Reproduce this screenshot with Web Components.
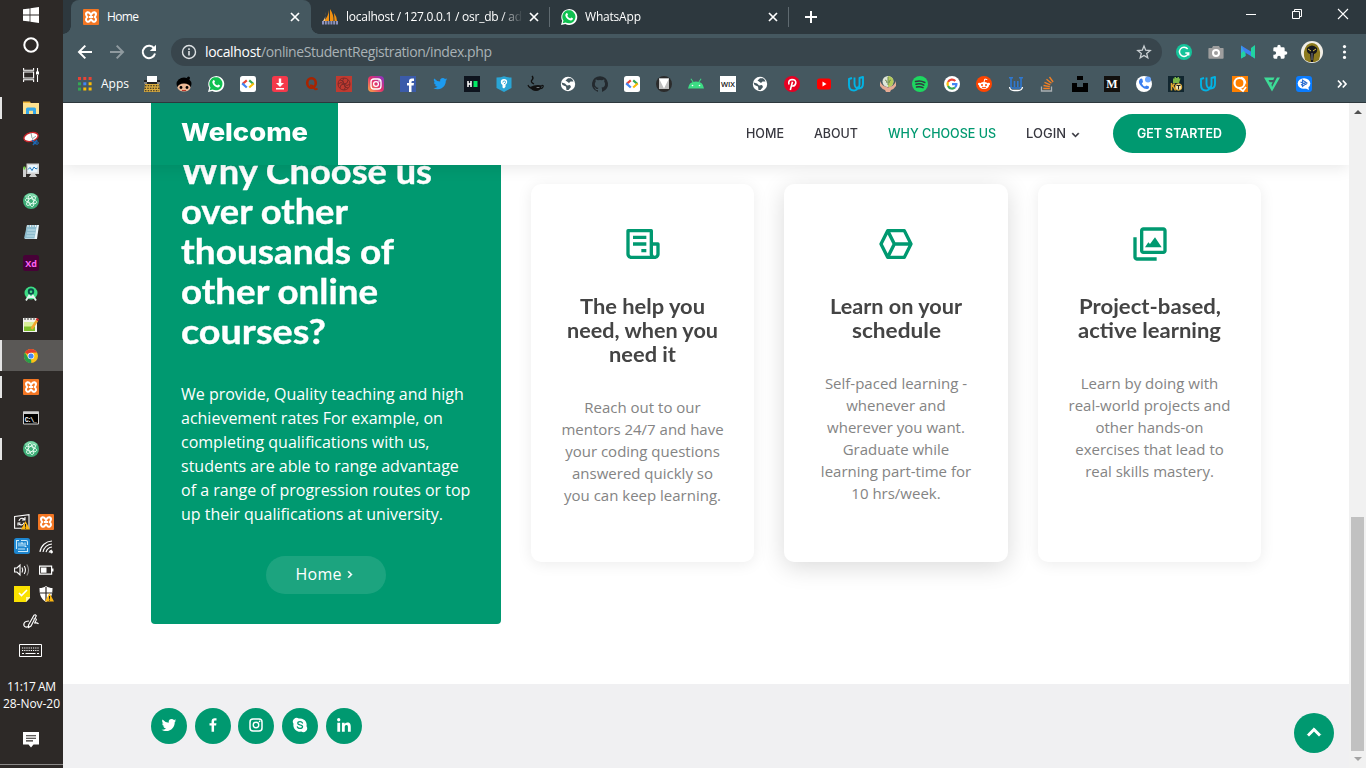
<!DOCTYPE html>
<html lang="en">
<head>
<meta charset="utf-8">
<title>Home</title>
<style>
html,body{margin:0;height:100%;overflow:hidden;background:#fff}
body{font-family:"Open Sans","Noto Sans",sans-serif}
</style>
</head>
<body>
<desktop-shell>
  <task-bar slot="bar"></task-bar>
  <browser-chrome slot="chrome"></browser-chrome>
  <site-page slot="page"></site-page>
</desktop-shell>
<script>
const G = '#009970';
const svg = (vb, body) => [vb, body];
const ICONS = {
  // taskbar
  win: svg(16, '<path fill="#fff" d="M0 2.3 6.6 1.4V7.6H0zM7.4 1.3 16 0V7.6H7.4zM0 8.4H6.6V14.6L0 13.7zM7.4 8.4H16V16L7.4 14.7z"/>'),
  ring: svg(16, '<circle cx="8" cy="8" r="6.7" fill="none" stroke="#fff" stroke-width="2"/>'),
  taskview: svg(16, '<g fill="none" stroke="#fff" stroke-width="1.1"><path d="M.6 1v2.2h10V1M.6 15v-2.200h10V15M.6 5h10v6H.6zM14.500 1v4M14.500 8v7"/></g><path fill="#fff" d="M13 4.500h3v3h-3z"/>'),
  folder: svg(16, '<path fill="#f0b73b" d="M0 1.500h7l1 2H0z"/><path fill="#fde18f" d="M0 3h16v11H0z"/><path fill="#37a8e8" d="M3 14V9q0-1.500 1.500-1.500h7Q13 7.500 13 9v5h-3v-3.200H6V14z"/>'),
  snip: svg(16, '<ellipse cx="8" cy="6" rx="7.300" ry="4.300" fill="#fff" stroke="#c9262c" stroke-width="1.400" transform="rotate(-15 8 6)"/><path d="M8 2l1 5M9 8l4-3" stroke="#9aa" fill="none"/><path d="M9 9l4 4M14 9l-4 5" stroke="#1d68b5" stroke-width="1.500"/><circle cx="14" cy="12" r="1.300" fill="none" stroke="#1d68b5"/>'),
  monitor: svg(16, '<path fill="#d4d4d4" d="M3.500 1.500H16V12H3.500z"/><path fill="#e9f5fd" d="M5 3h9.500v7.500H5z"/><path d="M5 7.500l2-2 2 3 2-3.500 2 2 1.500-1" fill="none" stroke="#1b77bd"/><path fill="#cfcfcf" d="M8 12h4l2 3H6zM0 5.500h3V15H0z"/><path fill="#6c3" d="M.500 4.500h1.800v3H.500z"/>'),
  atom: svg(16, '<circle cx="8" cy="8" r="8" fill="#3fae78"/><path d="M2.500 4.500a6.500 6.500 0 0 1 11 0" stroke="#9be8bf" fill="none" stroke-width="2.500" opacity=".7"/><g fill="none" stroke="#e9fff3" stroke-width=".9"><ellipse cx="8" cy="8" rx="5.800" ry="2.400" transform="rotate(15 8 8)"/><ellipse cx="8" cy="8" rx="5.800" ry="2.400" transform="rotate(75 8 8)"/><ellipse cx="8" cy="8" rx="5.800" ry="2.400" transform="rotate(135 8 8)"/></g>'),
  notepad: svg(16, '<path fill="#e9f5fa" d="M4 1h12l-2 14H2z"/><path fill="#8dbccd" d="M4 1h10l-2.500 13.500H1z"/><path d="M5 1v2M7.500 1v2M10 1v2M12.500 1v2" stroke="#eee"/><path d="M4.500 6h8M4 9h8M3.500 12h8" stroke="#c3e1ec"/>'),
  xd: svg(16, '<rect width="16" height="16" rx="2.500" fill="#470137"/><text x="8" y="11.500" text-anchor="middle" font-family="Open Sans" font-weight="700" font-size="9" fill="#ff61f6">Xd</text>'),
  studio: svg(16, '<circle cx="8" cy="7" r="6.500" fill="#3ddc84"/><path fill="none" stroke="#e3f5ee" stroke-width="1.800" d="M3 14.500 6.800 8.500M13 14.500 9.200 8.500M4 12q4-2 8 0"/><circle cx="8" cy="5.500" r="3.200" fill="#0b4f4c"/><circle cx="8" cy="5.800" r="1.300" fill="#3ddc84"/>'),
  npp: svg(16, '<path fill="#f3f3ee" d="M0 1h14v14H0z"/><path fill="#d9ef9a" d="M1 5h11v9H1z"/><path fill="#7fc02a" d="M1 9.500h11V14H1z"/><path d="M2 0v3M5 0v3M8 0v3M11 0v3" stroke="#444"/><path d="M8.500 12 14 3.500" stroke="#f1a72e" stroke-width="2.600"/><path d="M13.800 3.500l1.200-2" stroke="#c92a2a" stroke-width="2.600"/>'),
  chrome: svg(16, '<circle cx="8" cy="8" r="7" fill="#fbc116"/><path fill="#e33b2e" d="M8 8 1.900 4.500A7 7 0 0 1 14 4.600L8 4.800z"/><path fill="#2a9d4b" d="M8 8l.3 7A7 7 0 0 1 1.900 4.500L5.200 9.700z"/><circle cx="8" cy="8" r="3.300" fill="#fff"/><circle cx="8" cy="8" r="2.600" fill="#4586f4"/>'),
  xampp: svg(16, '<rect width="16" height="16" rx="1" fill="#f37623"/><path fill="none" stroke="#fff" stroke-width="2" stroke-linejoin="round" d="M8 6Q6.500 3 4.500 3.200 2.500 4 3.200 6 3.600 7.500 4.500 8 2.800 9 3 11q.8 2.300 3 1.500L8 10.500l2 2q2.200.8 3-1.500.2-2-1.500-3 .9-.5 1.300-2 .7-2-1.300-2.800Q9.500 3 8 6zM6 8h4"/>'),
  cmd: svg(16, '<path fill="#000" stroke="#cfcfcf" d="M.500 2h15v12H.500z"/><path fill="#cfcfcf" d="M0 1.500h16v2.500H0z"/><text x="1.800" y="11.500" font-family="Liberation Mono" font-weight="700" font-size="6.500" fill="#fff" textLength="12">C:\\_</text>'),
  // tray
  update: svg(16, '<path fill="none" stroke="#fff" stroke-width="1.100" d="M.600 2.500 15 .700v13.500H.600zM5 7a3 3 0 0 1 5-2l1 1M11 3v3H8M10 8.500a3 3 0 0 1-5 1.500M4 11.500V9h2.500"/><path fill="#fdb813" d="M11.500 7 16 15.500H7z"/><path d="M11.500 10v2.800M11.500 13.600v1" stroke="#222"/>'),
  graphics: svg(16, '<rect width="16" height="16" rx="2.500" fill="#1e86cf"/><path fill="none" stroke="#c8e9fb" stroke-width="1.100" d="M5 2.500H2.500V11M4 13.500h9.500V10M7 2.500h5q1.500 0 1.500 1.500v3M5 4.500v4M7 8.500V5q1.500-.5 2 .5v3M11 4.500v4h1.500M4 11h7"/>'),
  wifi: svg(16, '<g fill="none" stroke="#fff" stroke-width="1.100"><path d="M2 14A12.500 12.500 0 0 1 14 3M5 14a9.500 9.500 0 0 1 9-8M8 14.200a7 7 0 0 1 6-5.200M11 14.500a4 4 0 0 1 3-2.500"/></g><circle cx="13.500" cy="14" r="1.400" fill="#fff"/>'),
  sound: svg(16, '<g fill="none" stroke="#fff" stroke-width="1.100"><path d="M.600 6h2.300L6 3v10L2.900 10H.600zM8 5.500q1.500 2.500 0 5M10.200 4q2.500 4 0 8"/><path d="M12.800 2.500q3.500 5.500 0 11" opacity=".5"/></g>'),
  battery: svg(16, '<path fill="none" stroke="#fff" stroke-width="1.200" d="M1.600 4.100h12v8h-12z"/><path fill="#fff" d="M3 5.500h5.500v5.200H3zM14 6.500h1.500v3H14z"/>'),
  sticky: svg(16, '<path fill="#fae100" d="M0 0h16v11l-4 5H0z"/><path fill="#fff7a8" d="M12 11h4v1l-4 4z"/><path d="M5 7l2.500 2.500L13 4" fill="none" stroke="#fff" stroke-width="1.600"/>'),
  shield: svg(16, '<path fill="#fff" d="M8 0c2 1.500 4.500 2 6.500 2 0 7-1.500 11-6.500 14C3 13 1.500 9 1.500 2 4 2 6 1.500 8 0z"/><path d="M8 1v14M2 7h12" stroke="#2d2926" stroke-width="1.200"/><path fill="#fdb813" d="M11.500 7 16 15.500H7z"/><path d="M11.500 10v2.800M11.500 13.600v1" stroke="#222"/>'),
  pen: svg(16, '<path fill="none" stroke="#fff" stroke-width="1.100" d="M5.500 11 11 1.200q1.500-1 2.300.6L8 12l-2.500 1.500zM6 7Q2 7 1 9.500q-.8 2.500 1.500 3.500 2.500.5 3.500-1.500M10.500 5q4-1 2.500 1.500-1 1.500-1.500 3M12 9q2.500-.500 3.500 1"/>'),
  keyboard: ['23 13', '<path fill="none" stroke="#fff" d="M.500.500h22v12H.500z"/><path d="M3 4h17M3 6.500h17" stroke="#fff" stroke-dasharray="1.200 1"/><path d="M3 9.500h2M6.500 9.500h10M18 9.500h2" stroke="#fff" stroke-width="1.200"/>'],
  notice: svg(16, '<path fill="#fff" d="M0 0h16v12.500h-5.500L8 15.500l-2.500-3H0z"/><path d="M3 3.700h10M3 6.300h10M3 8.900h7" stroke="#2d2926" stroke-width="1.100"/>'),
  // toolbar
  back: svg(16, '<path fill="none" stroke="#fff" stroke-width="2" d="M15 8H2.500M8.300 1.600 2 8l6.300 6.400"/>'),
  fwd: svg(16, '<path fill="none" stroke="#8f9a9f" stroke-width="2" d="M1 8h12.500M7.700 1.600 14 8l-6.300 6.400"/>'),
  reload: svg(16, '<path fill="none" stroke="#fff" stroke-width="2" d="M13.300 4.800A6.200 6.200 0 1 0 14 9.500"/><path fill="#fff" d="M15 .800v6.200H8.800z"/>'),
  info: svg(16, '<circle cx="8" cy="8" r="6.500" fill="none" stroke="#dfe3e5" stroke-width="1.400"/><path d="M8 7v4.500M8 4.300v1.600" stroke="#dfe3e5" stroke-width="1.600"/>'),
  star: svg(16, '<path fill="none" stroke="#c9cfd2" stroke-width="1.300" d="m8 2 1.700 4.200 4.500.3-3.500 2.900 1.100 4.400L8 11.400l-3.800 2.400 1.100-4.400L1.800 6.500l4.500-.3z"/>'),
  grammarly: svg(16, '<circle cx="8" cy="8" r="8" fill="#15c39a"/><path fill="none" stroke="#fff" stroke-width="1.500" d="M11.700 5A4.600 4.600 0 1 0 12.500 9H9.300M12.700 8.500v3"/>'),
  camera: svg(16, '<path fill="#9e9e9e" d="M1 4h3l1-2h6l1 2h3q.6 0 .6.700v9.300q0 .8-.8.800H1.200q-.8 0-.8-.8V4.700Q.400 4 1 4z"/><circle cx="8" cy="9" r="3" fill="#9e9e9e" stroke="#fff" stroke-width="2"/>'),
  nimbus: svg(16, '<path fill="#35a3e8" d="M1 1.500 5.500 5v7L1 14.500z"/><path fill="#22d3a0" d="M1 14.500V9l4-2.500L5.500 12z"/><path fill="#3f7ff0" d="M1 1.500 15 10v4.500L5 8.500z"/><path fill="#22d3a0" d="M11 4l4-3v13.500L11 12z"/>'),
  puzzle: svg('24', '<path fill="#fff" d="M20.500 11H19V7a2 2 0 0 0-2-2h-4V3.500a2.500 2.500 0 0 0-5 0V5H4a2 2 0 0 0-2 2v3.800h1.500a2.700 2.700 0 0 1 0 5.400H2V20a2 2 0 0 0 2 2h3.800v-1.500a2.700 2.700 0 0 1 5.400 0V22H17a2 2 0 0 0 2-2v-4h1.500a2.500 2.500 0 0 0 0-5z"/>'),
  avatar: svg(22, '<circle cx="11" cy="11" r="11" fill="#f1eee6"/><path fill="#8c7a1e" d="M4 19Q1 10 6 4q5-4 10 0 5 6 2 15l-4 2H8z"/><path fill="#16171c" d="M6 7q5-5 10 0 1 5-3 6l-1 8h-2l-1-8Q5 12 6 7z"/><path d="M7 8l3 2M15 8l-3 2" stroke="#d8c044"/><path d="M11 12v7" stroke="#7d7f8c"/>'),
  dots: svg(16, '<g fill="#fff"><circle cx="8.500" cy="2.600" r="1.600"/><circle cx="8.500" cy="8" r="1.600"/><circle cx="8.500" cy="13.400" r="1.600"/></g>'),
  x: svg(10, '<path d="M1 1l8 8M9 1 1 9" stroke="#fff" stroke-width="1.700"/>'),
  plus: svg(12, '<path d="M6 0v12M0 6h12" stroke="#fff" stroke-width="2"/>'),
  min: svg(10, '<path d="M0 5.500h10" stroke="#fff"/>'),
  restore: svg(10, '<path d="M.500 2.500h7v7h-7zM2.500 2.500v-2h7v7h-2" fill="none" stroke="#fff"/>'),
  close: svg(10, '<path d="M0 0l10 10M10 0 0 10" stroke="#fff" stroke-width="1.100"/>'),
  pma: svg(16, '<path fill="#f29111" d="M7 1Q6.500 7 2 12h5zM8 0q4 6 3.500 12H8zM12 4q3 4 3 8h-2.500z"/><path fill="#f6c78a" d="M3.500 3Q4 8 1 12h2z"/><path d="M0 13.700h16" stroke="#8f93bd" stroke-width="3.500" stroke-dasharray="2 .8"/>'),
  // bookmarks
  apps: svg(14, '<g><path fill="#ea4335" d="M0 0h3v3H0zM5.300 0h3v3h-3zM10.600 0h3v3h-3z"/><path fill="#34a853" d="M0 5.300h3v3H0z"/><path fill="#4285f4" d="M5.300 5.300h3v3h-3z"/><path fill="#fbbc05" d="M10.600 5.300h3v3h-3zM5.300 10.600h3v3h-3zM10.600 10.600h3v3h-3z"/><path fill="#34a853" d="M0 10.600h3v3H0z"/></g>'),
  typewriter: svg(16, '<path fill="#222" d="M0 4h16v4H0z"/><path fill="#fff" d="M3 0h10v6H3z"/><path d="M0 7h3M13 7h3" stroke="#ddd"/><path fill="#d9ab3f" d="M1 8h14l1 8H0z"/><path d="M1 9.800h14M.500 12.300h15M1 14.800h14" stroke="#222" stroke-width="1.100" stroke-dasharray="1.500 1.200"/>'),
  ninja: svg(16, '<circle cx="12.500" cy="2" r="1.500"/><ellipse cx="8" cy="8" rx="7.500" ry="6.500"/><ellipse cx="8" cy="11.500" rx="6.500" ry="4" fill="#e9b896"/><circle cx="5" cy="11.500" r="1.400"/><circle cx="11" cy="11.500" r="1.400"/><path d="M6 14.500h4" stroke="#c0392b"/>'),
  whatsapp: svg(16, '<path fill="#fff" d="M0 16 1.200 11.800A8 8 0 1 1 4.300 15z"/><path fill="#10c050" d="M1.700 14.300 2.500 11.600A6.600 6.600 0 1 1 4.600 13.500z"/><path fill="#fff" d="M5.300 4.200c.5-.5 1-.3 1.200.2l.5 1.300-.7 1c.7 1.400 1.600 2.200 3 2.800l.9-1 1.700.8c.4 1.200-1 2.200-2 2.100C7 11 4.500 8.200 4.300 6.200c0-.8.400-1.500 1-2z"/>'),
  gdev: svg(16, '<rect width="16" height="16" rx="2.500" fill="#fff"/><g fill="none" stroke-width="2.200"><path stroke="#ea4335" d="M6.800 4.300 2.500 8"/><path stroke="#4285f4" d="M2.200 7.400 6.800 11.500"/><path stroke="#34a853" d="M9.200 4.300 13.500 8"/><path stroke="#fbbc05" d="M9.200 11.500l4.500-4"/></g>'),
  dl: svg(16, '<rect width="16" height="16" rx="2.500" fill="#f5394b"/><path fill="#fff" d="M6.800 2.500h2.400V7H12L8 11 4 7h2.800zM4 12h8v1.500H4z"/>'),
  quora: svg(16, '<ellipse cx="7.500" cy="7" rx="4.300" ry="4.800" fill="none" stroke="#a82400" stroke-width="2.600"/><path d="M6 9.500q3.500-.5 4.500 3 1 1.500 3 0" fill="none" stroke="#a82400" stroke-width="2"/>'),
  swirl: svg(16, '<path fill="#c03a30" d="M0 0h16v16H0z"/><g fill="none" stroke="#7d2a28" stroke-width="1"><circle cx="8" cy="8" r="6"/><path d="M8 2q-3 3 0 6t0 6M2 8q3-3 6 0t6 0M4 4q4 0 4 4t4 4M12 4q0 4-4 4t-4 4"/></g>'),
  insta: svg(16, '<defs><linearGradient id="g" x1="0" y1="1" x2="1" y2="0"><stop offset="0" stop-color="#fcb045"/><stop offset=".5" stop-color="#e1306c"/><stop offset="1" stop-color="#8134c9"/></linearGradient></defs><rect width="16" height="16" rx="4" fill="url(#g)"/><rect x="3" y="3" width="10" height="10" rx="3" fill="none" stroke="#fff" stroke-width="1.300"/><circle cx="8" cy="8" r="2.400" fill="none" stroke="#fff" stroke-width="1.300"/><circle cx="11" cy="5" r=".8" fill="#fff"/>'),
  fb: svg(16, '<path fill="#3b5ba9" d="M0 0h16v16H0z"/><path fill="#fff" d="M9 16V9.500H7V7h2V5.200Q9 2.500 11.800 2.500H14V5h-1.500q-1 0-1 1v1H14l-.4 2.500h-2.100V16z"/>'),
  tw: svg(24, '<path fill="#1d9bf0" transform="translate(2 1) scale(.87)" d="M23.900 4.600a10 10 0 0 1-2.800.8 5 5 0 0 0 2.100-2.700c-1 .6-2 1-3.100 1.200a4.900 4.900 0 0 0-8.400 4.500A14 14 0 0 1 1.600 3.200 4.900 4.900 0 0 0 3.200 9.700c-.8 0-1.600-.2-2.200-.6a4.900 4.900 0 0 0 3.900 4.900c-.7.200-1.500.2-2.200.1a4.900 4.900 0 0 0 4.600 3.400A9.900 9.900 0 0 1 0 19.500a14 14 0 0 0 7.500 2.200c9.100 0 14.300-7.700 14-14.600 1-.7 1.800-1.500 2.400-2.500z"/>'),
  hr: svg(16, '<path fill="#0e141e" d="M0 0h16v16H0z"/><path d="M4 5v6M7 5v6M4 8h3" stroke="#fff" stroke-width="1.500"/><path fill="#00ea64" d="M9.500 5h4v6h-4z"/>'),
  hex: svg(16, '<path fill="#2aa5d5" d="M.500 1.500q4.500 0 7.500-1.300 3 1.300 7.500 1.300V12L8 16 .500 12z"/><path fill="#fff" d="M4.800 6q0-2.800 3.200-3 3.200.2 3.200 3 0 1.800-1.700 2.700v2L8 12.500l-1.500-1V9Q4.800 8 4.800 6z"/><path d="M6.800 6.500q0-1.500 1.500-1.500t1.200 1.500-1.500 1" stroke="#2aa5d5" fill="none" stroke-width=".9"/>'),
  java: svg(16, '<path d="M4 0q2 2 0 4t2 4" stroke="#111" fill="none" stroke-width="1.300"/><path d="M2 11q1.500 4 6 4t6-5.500q-6-1.500-12 1.500z" fill="#111"/><path d="M0 9q1 3 5 3.500M13.500 9.500q2.500-.5 1.500 1.500t-3 1.500" stroke="#111" fill="none" stroke-width="1.200"/><path d="M8 11.700q2-1.300 4-.4-1.500 1.200-4 .4z" fill="#8a9298"/>'),
  globe: svg(16, '<circle cx="8" cy="8" r="7.200" fill="#fff"/><path fill="#455860" d="M8 2.200h3q2 1.300 2.500 3.300h-3L9 7 7 5.500 5.500 4.500zM1.500 6.500 5 7.500l2 2 3-.5 1 2-2.500 3H6.500l-.5-3.500-3.500-1.500z"/>'),
  github: svg(24, '<path fill="#23292e" d="M12 .3a12 12 0 0 0-3.800 23.400c.6.1.8-.3.800-.6v-2c-3.300.7-4-1.600-4-1.600-.6-1.400-1.400-1.800-1.400-1.800-1-.7.100-.7.100-.7 1.200 0 1.900 1.200 1.900 1.200 1 1.800 2.800 1.300 3.500 1 0-.8.400-1.300.7-1.600-2.700-.3-5.500-1.300-5.500-6 0-1.200.5-2.300 1.300-3.100-.2-.4-.6-1.600 0-3.200 0 0 1-.3 3.400 1.200a11.500 11.500 0 0 1 6 0c2.300-1.500 3.300-1.200 3.300-1.200.6 1.600.2 2.800 0 3.200.9.800 1.300 1.900 1.300 3.200 0 4.600-2.800 5.600-5.500 5.900.5.400.9 1 .9 2.200v3.300c0 .3.100.7.800.6A12 12 0 0 0 12 .3"/>'),
  material: svg(16, '<circle cx="8" cy="8" r="8" fill="#2b2b2b"/><path fill="#bdbdbd" d="M3 2.500h10v10.500H3z"/><path fill="#fff" d="M3 2.500h10L8 12.500z"/>'),
  android: svg(16, '<path fill="#3ddc84" d="M0 12.500q.8-7 8-7t8 7zM4.500 6 2.500 3l.8-.5 2.200 3.300zM11.500 6l2-3-.8-.5-2.200 3.300z"/><circle cx="4.500" cy="9.500" r=".8" fill="#fff"/><circle cx="11.500" cy="9.500" r=".8" fill="#fff"/>'),
  wix: svg(16, '<path fill="#fff" d="M0 0h16v16H0z"/><text x="1" y="10.800" font-family="Open Sans" font-weight="600" font-size="7.500" fill="#111" textLength="14" lengthAdjust="spacingAndGlyphs">WIX</text>'),
  pin: svg(16, '<circle cx="8" cy="8" r="8" fill="#e60023"/><path d="M5 8.500Q3.800 4 8 3.500q4 0 3.800 3.500-.6 3-3 3-1 0-1.300-1M8.500 5.800 6.300 14" fill="none" stroke="#fff" stroke-width="1.600"/>'),
  yt: svg(16, '<rect x="1" y="2.500" width="14" height="11" rx="2.500" fill="#f00"/><path fill="#fff" d="M6.500 5.500 10.500 8l-4 2.500z"/>'),
  udacity: svg(16, '<path fill="none" stroke="#02b3e4" stroke-width="1.900" stroke-linejoin="round" d="M4 2 1 3v6q0 5.500 5 5.500 3.500 0 3.800-4M6.500 1.500v6.500q.3 4.500 4.200 4.500 4.300 0 4.300-5V1l-3.500 1v6.500q0 2-1 2.500"/>'),
  hands: svg(16, '<circle cx="8" cy="5.500" r="5.500" fill="#dfe6d8"/><path fill="#b3c95a" d="M8 0a5.500 5.500 0 0 1 0 11z"/><path d="M8 1v8M5 4q2 0 2 3M11 4q-2 0-2 3" stroke="#6f8a52" fill="none"/><path fill="#e7ab94" d="M0 5q1.500 5 8 6.500Q14.500 10 16 5v5q-2 3-5 4l-1 2H6l-1-2q-3-1-5-4z"/>'),
  spotify: svg(16, '<circle cx="8" cy="8" r="8" fill="#1ed760"/><path fill="none" stroke="#303a3f" stroke-linecap="round" stroke-width="1.500" d="M3.500 5.500q5-1.500 9.300 1M4 8.300q4.200-1.200 7.800.8M4.500 11q3.500-1 6.500.7"/>'),
  google: svg(16, '<circle cx="8" cy="8" r="8" fill="#fff"/><g fill="none" stroke-width="2.200"><path stroke="#ea4335" d="M11.300 5A4.500 4.500 0 0 0 4 6"/><path stroke="#fbbc05" d="M4 6a4.600 4.600 0 0 0 0 4"/><path stroke="#34a853" d="M4 10a4.500 4.500 0 0 0 7 1.500"/><path stroke="#4285f4" d="M11 11.500q1.500-1.200 1.400-3.400H8"/></g>'),
  reddit: svg(16, '<circle cx="8" cy="8" r="8" fill="#ff4500"/><ellipse cx="8" cy="9.500" rx="5" ry="3.500" fill="#fff"/><circle cx="3.300" cy="8" r="1.300" fill="#fff"/><circle cx="12.700" cy="8" r="1.300" fill="#fff"/><circle cx="6" cy="9" r="1" fill="#ff4500"/><circle cx="10" cy="9" r="1" fill="#ff4500"/><path d="M8 6l.8-3 2.500.6" stroke="#fff" fill="none"/><path d="M6 11.200q2 1.200 4 0" stroke="#ff4500" fill="none"/>'),
  uw: svg(16, '<path fill="none" stroke="#2f78d0" stroke-width="1.600" d="M3 1v9.500q0 1.500 1.500 1.500h7q1.500 0 1.500-1.500V1M6.500 5v6M9.800 5v6M1 1.800h4M11 1.800h4"/><path fill="none" stroke="#fff" stroke-width="1.300" d="M1.500 11q.5 3.500 4.500 3.500h4q4 0 4.500-3.500"/>'),
  so: svg(16, '<path fill="none" stroke="#aab0b3" stroke-width="1.300" d="M1.500 10.500v4.500h10v-4.500"/><path fill="none" stroke="#f48024" stroke-width="1.300" d="M3.300 12.500h6.500M3.500 9.500l6.300 1.200M4.500 6.300l5.800 2.600M6.500 3.300l5 4M9.500 1l3.600 5"/>'),
  unsplash: svg(16, '<path d="M5 0h6v4H5zM0 7h5v4h6V7h5v9H0z"/>'),
  medium: svg(16, '<path fill="#12100e" d="M0 0h16v16H0z"/><text x="8" y="12" text-anchor="middle" font-family="Liberation Serif" font-weight="700" font-size="12" fill="#fff">M</text>'),
  phone: svg(16, '<circle cx="8" cy="8" r="8" fill="#fff"/><path fill="#3c7ff0" d="M4 3q2-1 2.500.5L7 6 5.800 7.500Q7 10 9 10.500l1.500-1L13 10.500q.5 2-1.500 2.500-3 .5-6-2.500T3 5z"/><circle cx="12" cy="3.500" r="3" fill="#6aa6ff"/>'),
  badge: svg(16, '<path fill="#11262f" d="M0 0h16v16H0z"/><path fill="#7ab648" d="M5 6V2.500h1.500V1H8v1h1.500V1H11v1.500h1.500L11 7H5z"/><path d="M3.500 7v7.500M3.500 11l3-3.500M5 10l2.500 4.500" fill="none" stroke="#e0a72e" stroke-width="1.500"/><circle cx="10.500" cy="11" r="3.300" fill="#f0e3b0" stroke="#e0a72e"/><path d="M8.500 9.500h4M10.500 9.500v4" stroke="#222"/>'),
  orange: svg(16, '<path fill="#ff8000" d="M0 0h16v16H0z"/><circle cx="7.500" cy="7" r="5" fill="none" stroke="#fff" stroke-width="2.200"/><path d="M9 1.500q4 1 4.500 6M6 11.500l5 3.500 3-4" stroke="#fff" stroke-width="1.700" fill="none"/>'),
  fv: svg(16, '<path fill="#3ddc97" d="M0 1.500h10.500L9.300 4H4.500l1.200 2.300h3L7.500 8.500 8 11l5-9.500h3L8 15.500z"/>'),
  bluedot: svg(16, '<rect width="16" height="16" rx="3" fill="#0a7cff"/><ellipse cx="8" cy="7.500" rx="6.300" ry="5.300" fill="#fff"/><path fill="none" stroke="#2d6fd0" stroke-width="1.100" d="M6.500 4v6.500L11 7zM4.500 6l6 2.500M5 9l5-3"/><path fill="#fff" d="M9 12l4 2-1-4z"/>'),
  more: svg(12, '<path d="M2 2.500 5.200 6 2 9.500M6.800 2.500 10 6 6.800 9.500" fill="none" stroke="#fff" stroke-width="1.700"/>'),
  // site
  receipt: svg(24, '<path d="M21 11h-3V4a1 1 0 0 0-1-1H3a1 1 0 0 0-1 1v14c0 1.654 1.346 3 3 3h14c1.654 0 3-1.346 3-3v-6a1 1 0 0 0-1-1zM5 19a1 1 0 0 1-1-1V5h12v13c0 .351.061.688.171 1H5zm15-1a1 1 0 0 1-2 0v-5h2v5z"/><path d="M6 7h8v2H6zm0 4h8v2H6zm5 4h3v2h-3z"/>'),
  cube: svg(24, '<path d="m21.895 11.553-4-8A1 1 0 0 0 17 3H7c-.379 0-.725.214-.895.553l-4 8a1 1 0 0 0 0 .895l4 8c.17.338.516.552.895.552h10c.379 0 .725-.214.895-.553l4-8a1 1 0 0 0 0-.894zM19.382 11h-7.764l-3-6h7.764l3 6zM7 6.236 9.882 12 7 17.764 4.118 12 7 6.236zM16.382 19H8.618l3-6h7.764l-3 6z"/>'),
  images: svg(24, '<path d="M20 2H8c-1.103 0-2 .897-2 2v12c0 1.103.897 2 2 2h12c1.103 0 2-.897 2-2V4c0-1.103-.897-2-2-2zM8 16V4h12l.002 12H8z"/><path d="M4 8H2v12c0 1.103.897 2 2 2h12v-2H4V8z"/><path d="m12 12-1-1-2 3h10l-4-6z"/>'),
  down: svg(24, '<path fill="#37373f" stroke="#37373f" stroke-width=".6" d="M16.293 9.293 12 13.586 7.707 9.293l-1.414 1.414L12 16.414l5.707-5.707z"/>'),
  right: svg(24, '<path fill="#fff" stroke="#fff" stroke-width=".6" d="M10.707 17.707 16.414 12l-5.707-5.707-1.414 1.414L13.586 12l-4.293 4.293z"/>'),
  up: svg(24, '<path d="m6.293 13.293 1.414 1.414L12 10.414l4.293 4.293 1.414-1.414L12 7.586z" stroke="#fff" stroke-width=".7"/>'),
  sTwitter: svg(24, '<path d="M19.633 7.997c.013.175.013.349.013.523 0 5.325-4.053 11.461-11.460 11.461-2.282 0-4.402-.661-6.186-1.809.324.037.636.050.973.050a8.070 8.070 0 0 0 5.001-1.721 4.036 4.036 0 0 1-3.767-2.793c.249.037.499.062.761.062.361 0 .724-.050 1.061-.137a4.027 4.027 0 0 1-3.230-3.953v-.050c.537.299 1.160.486 1.820.511a4.022 4.022 0 0 1-1.796-3.354c0-.748.199-1.434.548-2.032a11.457 11.457 0 0 0 8.306 4.215c-.062-.3-.1-.611-.1-.923a4.026 4.026 0 0 1 4.028-4.028c1.160 0 2.207.486 2.943 1.272a7.957 7.957 0 0 0 2.556-.973 4.020 4.020 0 0 1-1.771 2.220 8.073 8.073 0 0 0 2.319-.624 8.645 8.645 0 0 1-2.019 2.083z"/>'),
  sFacebook: svg(24, '<path d="M13.397 20.997v-8.196h2.765l.411-3.209h-3.176V7.548c0-.926.258-1.560 1.587-1.560h1.684V3.127A22.336 22.336 0 0 0 14.201 3c-2.444 0-4.122 1.492-4.122 4.231v2.355H7.332v3.209h2.753v8.202h3.312z"/>'),
  sInstagram: svg(24, '<path fill-rule="evenodd" d="M8 3h8a5 5 0 0 1 5 5v8a5 5 0 0 1-5 5H8a5 5 0 0 1-5-5V8a5 5 0 0 1 5-5zm0 2A3 3 0 0 0 5 8v8a3 3 0 0 0 3 3h8a3 3 0 0 0 3-3V8a3 3 0 0 0-3-3zM12 7.400a4.600 4.600 0 1 1 0 9.200 4.600 4.600 0 0 1 0-9.200zm0 1.800a2.800 2.800 0 1 0 0 5.600 2.800 2.800 0 0 0 0-5.600z"/><circle cx="16.800" cy="7.200" r="1.100"/>'),
  sSkype: svg(24, '<path d="M20.700 13.700a8.700 8.700 0 0 0-10.300-10.300 5.100 5.100 0 0 0-7.100 7 8.700 8.700 0 0 0 10.300 10.300 5.100 5.100 0 0 0 7.100-7z"/><path fill="none" stroke="#009970" stroke-width="1.700" stroke-linecap="round" d="M15.300 9.300Q14.500 7.500 12 7.500 9 7.500 9 9.500q0 1.600 3 2.300 3.500.7 3.400 2.500-.2 2.300-3.400 2.300-2.600 0-3.500-2"/>'),
  sLinkedin: svg(24, '<circle cx="4.983" cy="5.009" r="2.188"/><path d="M9.237 8.855v12.139h3.769v-6.003c0-1.584.298-3.118 2.262-3.118 1.937 0 1.961 1.811 1.961 3.218v5.904H21v-6.657c0-3.270-.704-5.783-4.526-5.783-1.835 0-3.065 1.007-3.568 1.960h-.051v-1.660H9.237zm-6.142 0H6.870v12.139H3.095z"/>')
};

function define(name, css, html, hook) {
  const t = document.createElement('template');
  customElements.define(name, class extends HTMLElement {
    connectedCallback() {
      if (this.shadowRoot) return;
      t.innerHTML = `<style>${css}</style>${typeof html === 'function' ? html(this) : html}`;
      this.attachShadow({ mode: 'open' }).append(t.content.cloneNode(true));
      if (hook) hook(this);
    }
  });
}
const ic = (n, w = 16, h = w) => `<app-icon name="${n}" w="${w}" h="${h}"></app-icon>`;
const fit = (t, w) => `<fit-text w="${w}">${t}</fit-text>`;
const wide = (t, w) => `<fit-text wide w="${w}">${t}</fit-text>`;

define('desktop-shell', `
:host{display:grid;grid-template-columns:63px 1fr;height:768px;width:1366px;overflow:hidden}
.main{display:grid;grid-template-rows:103px 665px;min-width:0}
`, `<slot name="bar"></slot><div class="main"><slot name="chrome"></slot><slot name="page"></slot></div>`);

const slot = (n, c = '', s = 16) => `<div class="s ${c}">${ic(n, s)}</div>`;
define('task-bar', `
:host{display:flex;flex-direction:column;background:#2d2927;color:#fff;height:768px;box-sizing:border-box}
.s{height:31px;display:flex;align-items:center;justify-content:center;position:relative;flex:none;padding-right:1px}
.top .s{height:30px}
.apps{margin-top:2px;height:418px}
.open::before{content:"";position:absolute;left:0;top:5px;width:2px;height:22px;background:#e4e4e4}
.active{background:#5a5856}
.active::before{top:0;height:31px}
.tray{display:grid;grid-template-columns:24px 24px;grid-auto-rows:24px;margin-left:10px;place-items:center}
.mid{padding-top:1px}
.mid .s{height:29px}
.mid .s+.s{padding-right:3px}
.time{margin-top:13px;text-align:center;font:12px/17px "Open Sans",sans-serif;display:flex;flex-direction:column;align-items:center;height:34px}
.note{height:49px;padding:3px 1px 0 0;display:flex;align-items:center;justify-content:center;border-bottom:1px solid #8a8887}
`, `<div class="top">${slot('win')}${slot('ring')}${slot('taskview')}</div>
<div class="apps">${slot('folder', 'open')}${slot('snip')}${slot('monitor')}${slot('atom')}${slot('notepad')}${slot('xd')}${slot('studio')}${slot('npp')}${slot('chrome', 'open active')}${slot('xampp', 'open')}${slot('cmd')}${slot('atom', 'open')}</div>
<div class="tray">${['update', 'xampp', 'graphics', 'wifi', 'sound', 'battery', 'sticky', 'shield'].map(n => ic(n)).join('')}</div>
<div class="mid">${slot('pen')}<div class="s">${ic('keyboard', 23, 13)}</div></div>
<div class="time">${fit('11:17 AM', 49)}${fit('28-Nov-20', 57)}</div>
<div class="note">${ic('notice')}</div>`);

const marks = ['typewriter','ninja','whatsapp','gdev','dl','quora','swirl','insta','fb','tw','hr','hex','java','globe','github','gdev','material','android','wix','globe','pin','yt','udacity','hands','spotify','google','reddit','uw','so','unsplash','medium','phone','badge','udacity','orange','fv','bluedot'];
define('browser-chrome', `
:host{display:flex;flex-direction:column;background:#455860;color:#fff;box-sizing:border-box;border-bottom:1px solid #2d383d;font:12px/16px "Open Sans",sans-serif}
.tabs{height:34px;background:#2d383e;display:flex;align-items:stretch;padding-left:8px}
.win{margin-left:auto;display:flex;gap:36px;padding-right:18px;height:28px;align-items:center}
.plus{display:flex;align-items:center;padding-left:16px}
.bar{height:36px;display:flex;align-items:center}
.nav{display:flex;gap:16px;padding-left:14px;width:108px;box-sizing:border-box}
.omni{width:991px;height:28px;border-radius:14px;background:#38454c;display:flex;align-items:center;box-sizing:border-box;padding:0 10px;font-size:14px;color:#a9b2b6}
.omni b{color:#fff;font-weight:400}
.omni .t{margin-left:8px;flex:1;display:flex}
.ext{display:flex;gap:16px;padding-left:14px;align-items:center}
.ext app-icon[name=avatar]{margin:0 -3px}
.marks{height:28px;display:flex;align-items:center;padding-left:15px}
.marks .a{display:flex;align-items:center;width:66px;gap:9px}
.marks .r{display:flex;gap:16px}
.marks .m{margin-left:24px;display:flex}
`, `<div class="tabs"><browser-tab active icon="xampp" label="Home" w="32"></browser-tab><browser-tab sep icon="pma" label="localhost / 127.0.0.1 / osr_db / ad" w="176"></browser-tab><browser-tab sep icon="whatsapp" label="WhatsApp" w="56"></browser-tab>
<div class="plus">${ic('plus', 12)}</div><div class="win">${ic('min', 10)}${ic('restore', 10)}${ic('close', 10)}</div></div>
<div class="bar"><div class="nav">${ic('back')}${ic('fwd')}${ic('reload')}</div>
<div class="omni">${ic('info')}<span class="t"><b>${fit('localhost', 56)}</b>${fit('/onlineStudentRegistration/index.php', 231)}</span>${ic('star')}</div>
<div class="ext">${['grammarly', 'camera', 'nimbus', 'puzzle'].map(n => ic(n)).join('')}${ic('avatar', 22)}${ic('dots')}</div></div>
<div class="marks"><div class="a">${ic('apps', 14)}${fit('Apps', 28)}</div><div class="r">${marks.map(n => ic(n)).join('')}</div><div class="m">${ic('more', 12)}</div></div>`);

define('browser-tab', `
:host{display:flex;align-items:center;width:239px;height:34px;box-sizing:border-box;padding:0 11px;position:relative}
:host([active]){width:240px;padding-left:12px;background:#455860;border-radius:8px 8px 0 0}
:host([active])::before,:host([active])::after{content:"";position:absolute;bottom:0;width:8px;height:8px;background:radial-gradient(circle at 0 0,#2d383e 7.500px,#455860 8px)}
:host([active])::before{left:-8px}
:host([active])::after{right:-8px;background:radial-gradient(circle at 100% 0,#2d383e 7.500px,#455860 8px)}
:host([sep])::after{content:"";position:absolute;right:0;top:7px;width:1px;height:20px;background:#5f6a70}
.l{margin-left:8px;flex:1;overflow:hidden;white-space:nowrap;display:flex}
:host([sep]) .l{-webkit-mask:linear-gradient(90deg,#000 155px,transparent 177px)}
`, el => `${ic(el.getAttribute('icon'))}<div class="l">${fit(el.getAttribute('label'), el.getAttribute('w'))}</div>${ic('x', 10)}`);

define('site-page', `
:host{display:grid;grid-template-columns:1286px 17px;background:#fff;position:relative;overflow:hidden;height:665px}
.view{position:relative;height:665px;overflow:hidden}
site-header{position:absolute;left:0;right:0;top:0;z-index:2}
.why{display:flex;height:581px;padding-left:88px;align-items:flex-start}
.cards{display:grid;grid-template-columns:223px 224px 223px;gap:30px;margin:81px 0 0 30px}
`, `<div class="view"><site-header></site-header>
<div class="why"><why-panel></why-panel><div class="cards">
<feature-card icon="receipt" lines="The help you:125|need, when you:151|need it:67">Reach out to our<br>mentors 24/7 and have<br>your coding questions<br>answered quickly so<br>you can keep learning.</feature-card>
<feature-card raised icon="cube" lines="Learn on your:132|schedule:89">Self-paced learning -<br>whenever and<br>wherever you want.<br>Graduate while<br>learning part-time for<br>10 hrs/week.</feature-card>
<feature-card icon="images" lines="Project-based,:142|active learning:143">Learn by doing with<br>real-world projects and<br>other hands-on<br>exercises that lead to<br>real skills mastery.</feature-card>
</div></div><site-footer></site-footer></div><scroll-bar></scroll-bar>`);

define('site-header', `
:host{display:flex;height:62px;background:#fff;box-shadow:0 2px 15px rgba(0,0,0,.1);font:500 12.500px/20px Inter,sans-serif;color:#37373f;padding-left:88px;align-items:center}
.brand{background:${G};width:157px;height:62px;padding-left:30px;color:#fff;font:800 25px/59px Inter,sans-serif}
nav{display:flex;align-items:center;margin-left:408px;gap:30px}
.on{color:${G}}
.login{display:flex;align-items:center;gap:3px;width:57px}
.cta{width:133px;height:39px;border-radius:20px;background:${G};color:#fff;display:flex;align-items:center;justify-content:center;font-weight:600;margin:0 0 1px 30px}
`, `<div class="brand">${wide('Welcome', 127)}</div><nav>${wide('HOME', 38)}${wide('ABOUT', 44)}<span class="on">${wide('WHY CHOOSE US', 108)}</span><span class="login">${wide('LOGIN', 40)}${ic('down', 15)}</span></nav><div class="cta">${wide('GET STARTED', 85)}</div>`);

define('why-panel', `
:host{display:block;width:290px;height:521px;box-sizing:content-box;padding:0 30px;background:${G};border-radius:4px;color:#fff}
h3{margin:0;padding-top:48px;font:700 33.500px/40px Lato,sans-serif;display:flex;flex-direction:column;align-items:flex-start;-webkit-text-stroke:.35px #fff}
p{margin:31px 0 30px;font:16px/24px "Open Sans",sans-serif;white-space:nowrap}
.btn{width:120px;height:36px;border-radius:19px;background:rgba(255,255,255,.11);margin:0 auto;display:flex;align-items:center;justify-content:center;font:16px/24px "Open Sans",sans-serif;padding-bottom:2px}
`, `<h3>${wide('Why Choose us', 251)}${wide('over other', 167)}${wide('thousands of', 213)}${wide('other online', 197)}${wide('courses?', 145)}</h3>
<p>We provide, Quality teaching and high<br>achievement rates For example, on<br>completing qualifications with us,<br>students are able to range advantage<br>of a range of progression routes or top<br>up their qualifications at university.</p>
<div class="btn">${fit('Home', 46)}${ic('right', 15)}</div>`);

define('feature-card', `
:host{display:flex;flex-direction:column;align-items:center;height:378px;box-sizing:border-box;padding-top:40px;background:#fff;border-radius:10px;box-shadow:0 2px 15px rgba(0,0,0,.08);text-align:center;fill:${G}}
:host([raised]){box-shadow:0 5px 25px rgba(0,0,0,.15);position:relative;z-index:1}
h4{margin:30px 0 30px;display:flex;flex-direction:column;align-items:center;font:700 20px/24px Lato,sans-serif;color:#444}
p{margin:0;font:15px/22px "Open Sans",sans-serif;color:#848484;white-space:nowrap}
`, el => `${ic(el.getAttribute('icon'), 40)}<h4>${el.getAttribute('lines').split('|').map(l => { const i = l.lastIndexOf(':'); return wide(l.slice(0, i), l.slice(i + 1)); }).join('')}</h4><p><slot></slot></p>`);

define('site-footer', `
:host{display:flex;height:84px;box-sizing:border-box;background:#f0f0f2;padding:24px 15px 0 88px;gap:7.700px;fill:#fff}
.c{width:36px;height:36px;border-radius:50%;background:${G};display:flex;align-items:center;justify-content:center}
.c app-icon{margin-top:-2px}
.top{margin:5px 0 0 auto;width:40px;height:40px}
.top app-icon{margin:0}
`, `${['sTwitter', 'sFacebook', 'sInstagram', 'sSkype', 'sLinkedin'].map(n => `<div class="c">${ic(n, 18)}</div>`).join('')}<div class="c top">${ic('up', 28)}</div>`);

define('scroll-bar', `
:host{display:flex;flex-direction:column;align-items:center;background:#f1f1f1;height:665px}
i{width:0;height:0;border:4px solid transparent}
.u{border-bottom-color:#505050;border-top:0;margin-top:7px}
.t{width:13px;height:234px;background:#c1c1c1;margin-top:403px}
.d{border-top-color:#a3a3a3;border-bottom:0;margin-top:6px}
`, `<i class="u"></i><div class="t"></div><i class="d"></i>`);

define('app-icon', `:host{display:inline-flex;flex:none}svg{display:block;overflow:visible}`, el => {
  const [vb, body] = ICONS[el.getAttribute('name')];
  const box = String(vb).includes(' ') ? vb : `${vb} ${vb}`;
  return `<svg width="${el.getAttribute('w')}" height="${el.getAttribute('h')}" viewBox="0 0 ${box}">${body}</svg>`;
});

// One line of text that fills the width given in "w": by tracking, or with "wide" by stretching its letters.
define('fit-text', `:host{display:inline-block;white-space:nowrap;text-align:left}:host([wide]) span{display:inline-block;transform-origin:0 50%}`, '<span><slot></slot></span>', el => {
  const s = el.shadowRoot.querySelector('span');
  const n = el.textContent.length, w = +el.getAttribute('w');
  const natural = s.getBoundingClientRect().width;
  if (el.hasAttribute('wide')) {
    el.style.width = w + 'px';
    s.style.transform = `scaleX(${w / natural})`;
    return;
  }
  const ls = (w - natural) / (n - 1);
  s.style.letterSpacing = ls + 'px';
  s.style.marginRight = -ls + 'px';
});
</script>
</body>
</html>
